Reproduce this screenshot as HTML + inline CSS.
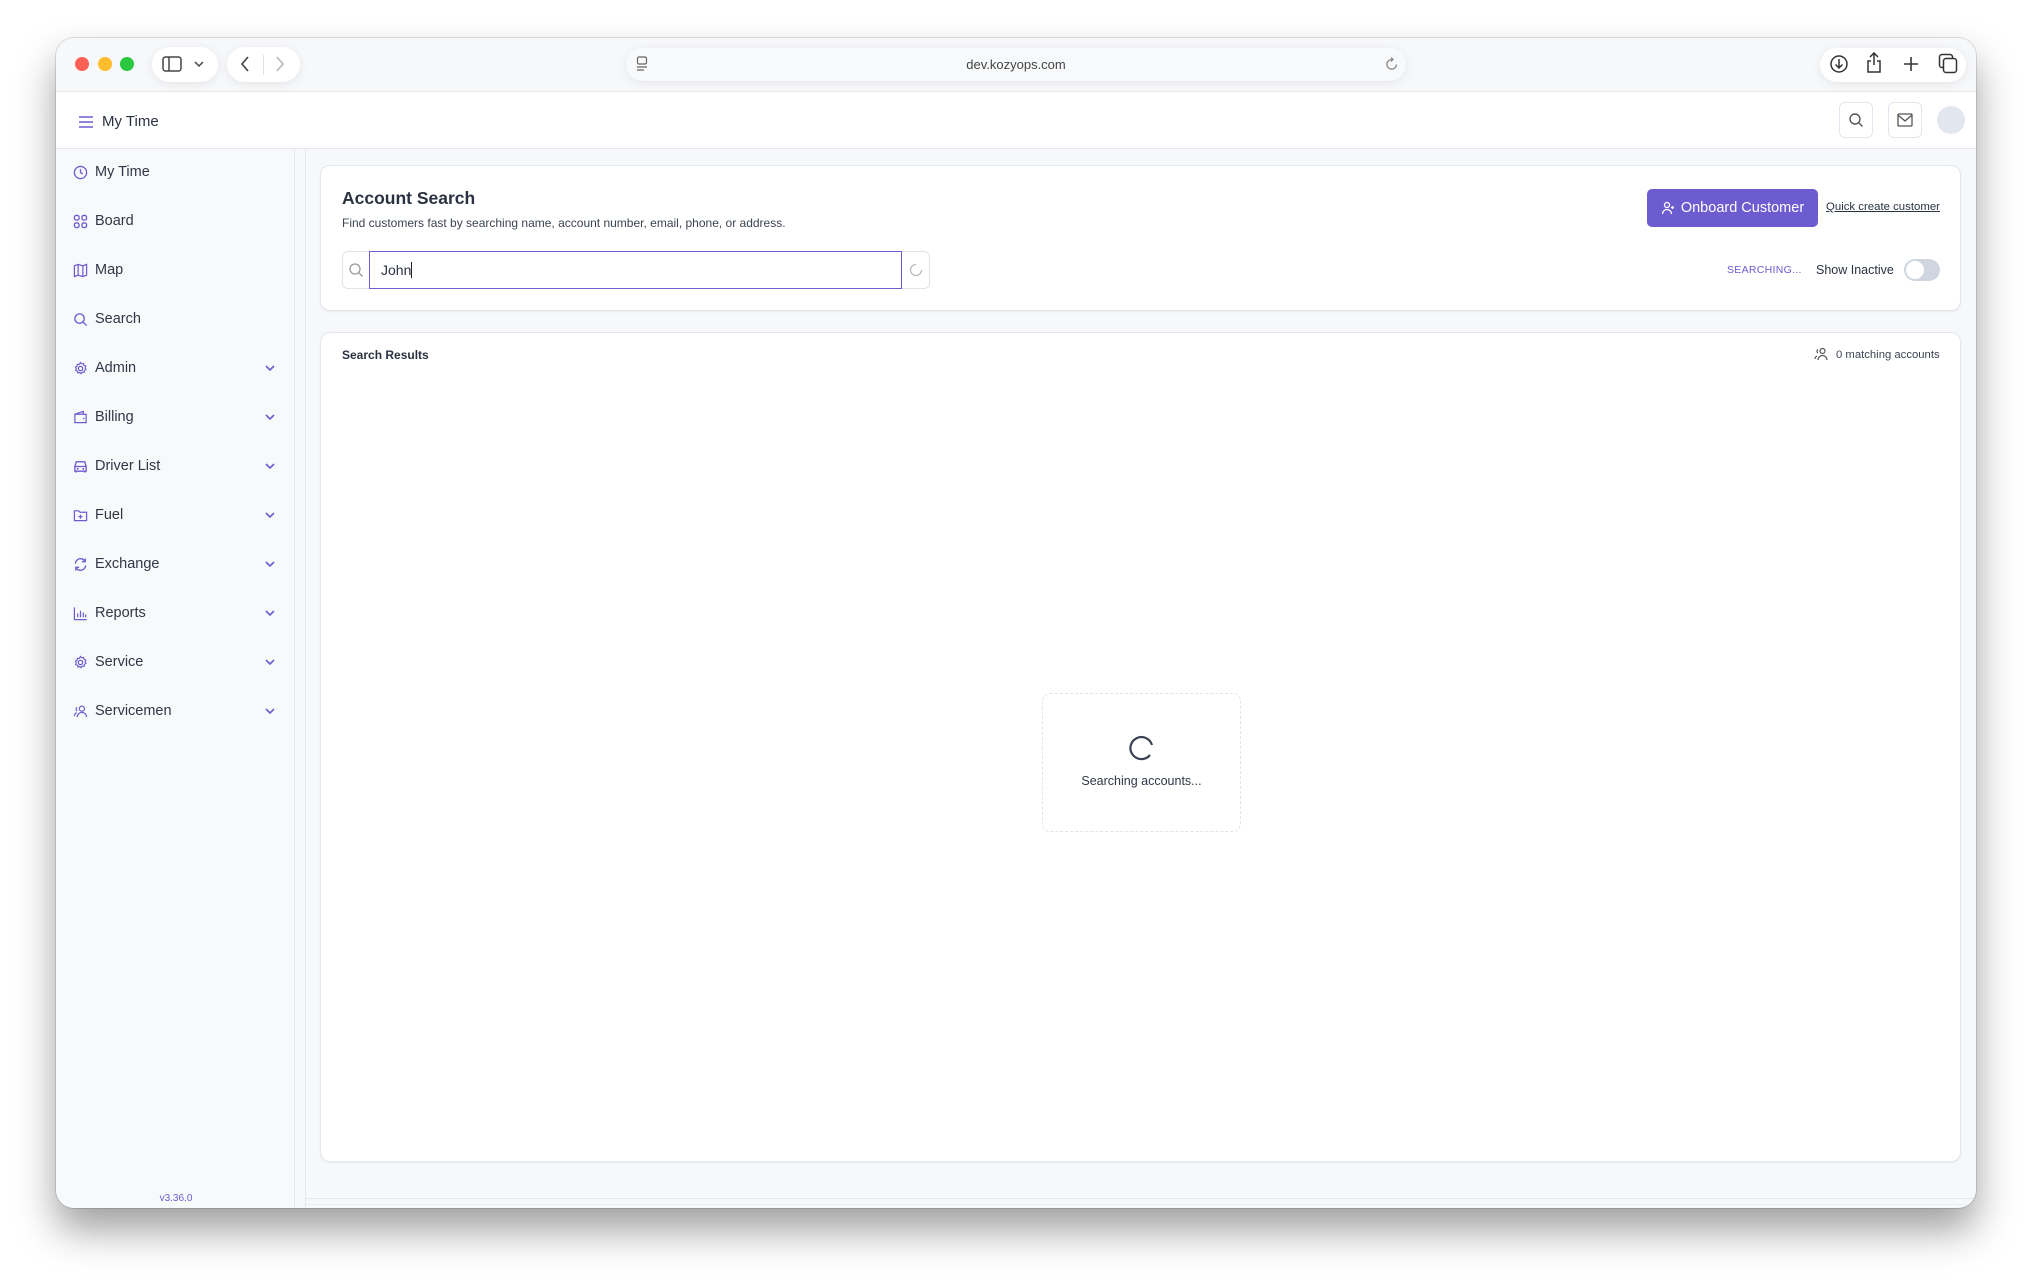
<!DOCTYPE html>
<html><head><meta charset="utf-8"><style>
*{box-sizing:border-box;margin:0;padding:0}
body{width:2032px;height:1282px;background:#fff;font-family:"Liberation Sans",sans-serif;position:relative;overflow:hidden;color:#2a3242}
.abs{position:absolute}
.win{left:56px;top:38px;width:1920px;height:1170px;border-radius:18px;background:#f7f8fa;overflow:hidden;box-shadow:0 22px 40px rgba(0,0,0,.38),0 0 0 1px rgba(0,0,0,.12)}
.pill{background:#fff;border-radius:18px;box-shadow:0 2px 10px rgba(0,0,0,.08)}
.dot{width:14px;height:14px;border-radius:50%}
.side{font-size:14.5px;color:#2f3747}
.item{position:absolute;left:17px;height:20px;display:flex;align-items:center;width:220px}
.item svg{width:15px;height:15px;margin-right:7px;flex:none}
.item .chev{position:absolute;left:191px;width:12px;height:12px;margin:0}
.card{background:#fff;border:1px solid #e4e7ec;border-radius:10px;box-shadow:0 1px 2px rgba(0,0,0,.06)}
</style></head><body>
<div class="abs win">
  <div class="abs" style="left:0;top:0;width:1920px;height:53px;background:#f7f8fa"></div>
  <div class="abs dot" style="left:19px;top:19px;background:#fe5f57"></div>
  <div class="abs dot" style="left:42px;top:19px;background:#febc2e"></div>
  <div class="abs dot" style="left:64px;top:19px;background:#28c840"></div>
  <div class="abs pill" style="left:96px;top:9px;width:66px;height:35px"></div>
  <svg class="abs" style="left:106px;top:18px" width="20" height="16" viewBox="0 0 20 16"><rect x="1" y="1" width="18" height="14" rx="2.5" fill="none" stroke="#444" stroke-width="1.5"/><line x1="7" y1="1" x2="7" y2="15" stroke="#444" stroke-width="1.5"/></svg>
  <svg class="abs" style="left:138px;top:22px" width="10" height="8" viewBox="0 0 10 8"><path d="M1 2l4 4 4-4" fill="none" stroke="#444" stroke-width="1.5"/></svg>
  <div class="abs pill" style="left:171px;top:9px;width:73px;height:35px"></div>
  <svg class="abs" style="left:183px;top:17px" width="12" height="18" viewBox="0 0 12 18"><path d="M9 2L3 9l6 7" fill="none" stroke="#444" stroke-width="1.7"/></svg>
  <div class="abs" style="left:207px;top:17px;width:1px;height:20px;background:#e2e2e2"></div>
  <svg class="abs" style="left:218px;top:17px" width="12" height="18" viewBox="0 0 12 18"><path d="M3 2l6 7-6 7" fill="none" stroke="#bbb" stroke-width="1.7"/></svg>
  <div class="abs pill" style="left:570px;top:10px;width:780px;height:33px;background:#f8f9fa"></div>
  <svg class="abs" style="left:580px;top:18px" width="12" height="16" viewBox="0 0 12 16"><rect x="1.5" y="1" width="9" height="7" rx="1.5" fill="none" stroke="#666" stroke-width="1.2"/><line x1="1" y1="11" x2="11" y2="11" stroke="#666" stroke-width="1.2"/><line x1="1" y1="14" x2="8" y2="14" stroke="#666" stroke-width="1.2"/></svg>
  <div class="abs" style="left:570px;top:19px;width:780px;text-align:center;font-size:13px;color:#444">dev.kozyops.com</div>
  <svg class="abs" style="left:1329px;top:18px" width="14" height="16" viewBox="0 0 14 16"><path d="M11.5 8.5A4.8 4.8 0 1 1 7 3.5" fill="none" stroke="#888" stroke-width="1.3"/><path d="M6 1.5l2 2-2 2" fill="none" stroke="#888" stroke-width="1.3"/></svg>
  <div class="abs pill" style="left:1764px;top:10px;width:146px;height:34px"></div>
  <svg class="abs" style="left:1773px;top:16px" width="20" height="20" viewBox="0 0 20 20"><circle cx="10" cy="10" r="8" fill="none" stroke="#333" stroke-width="1.5"/><path d="M10 5v9M6.5 10.5L10 14l3.5-3.5" fill="none" stroke="#333" stroke-width="1.5"/></svg>
  <svg class="abs" style="left:1810px;top:14px" width="16" height="22" viewBox="0 0 16 22"><path d="M8 1v12M4 5l4-4 4 4" fill="none" stroke="#333" stroke-width="1.5"/><path d="M5 9H2v11h12V9h-3" fill="none" stroke="#333" stroke-width="1.5"/></svg>
  <svg class="abs" style="left:1846px;top:17px" width="18" height="18" viewBox="0 0 18 18"><path d="M9 2v14M2 9h14" stroke="#333" stroke-width="1.6"/></svg>
  <svg class="abs" style="left:1882px;top:15px" width="20" height="21" viewBox="0 0 20 21"><rect x="1.5" y="1.5" width="13" height="13" rx="2.5" fill="none" stroke="#333" stroke-width="1.5"/><rect x="5.5" y="5.5" width="13" height="14" rx="2.5" fill="#fff" stroke="#333" stroke-width="1.5"/></svg>

  <div class="abs" style="left:0;top:53px;width:1920px;height:58px;background:#fff;border-top:1px solid #e6e8ee;border-bottom:1px solid #e3e6ee"></div>
  <svg class="abs" style="left:22px;top:77px" width="16" height="14" viewBox="0 0 16 14"><path d="M1 2h14M1 7h14M1 12h14" stroke="#6d5bd0" stroke-width="1.6"/></svg>
  <div class="abs" style="left:46px;top:75px;font-size:15px;color:#2a3242">My Time</div>
  <div class="abs" style="left:1783px;top:64px;width:34px;height:36px;border:1px solid #e3e6ee;border-radius:6px;background:#fff"></div>
  <svg class="abs" style="left:1792px;top:74px" width="16" height="16" viewBox="0 0 16 16"><circle cx="7" cy="7" r="5" fill="none" stroke="#555" stroke-width="1.4"/><path d="M11 11l3.5 3.5" stroke="#555" stroke-width="1.4"/></svg>
  <div class="abs" style="left:1832px;top:64px;width:34px;height:36px;border:1px solid #e3e6ee;border-radius:6px;background:#fff"></div>
  <svg class="abs" style="left:1841px;top:75px" width="16" height="14" viewBox="0 0 16 14"><rect x="1" y="1" width="14" height="12" rx="1" fill="none" stroke="#555" stroke-width="1.3"/><path d="M1 2l7 6 7-6" fill="none" stroke="#555" stroke-width="1.3"/></svg>
  <div class="abs" style="left:1881px;top:68px;width:28px;height:28px;border-radius:50%;background:#e1e6ef"></div>

  <div class="abs side" style="left:0;top:111px;width:239px;height:1059px;background:#f8f9fb;border-right:1px solid #e6e8ee">
    <div class="item" style="top:13px"><svg viewBox="0 0 16 16"><circle cx="8" cy="8" r="6.5" fill="none" stroke="#6d5bd0" stroke-width="1.4"/><path d="M8 4.5V8l2.5 1.5" fill="none" stroke="#6d5bd0" stroke-width="1.4"/></svg>My Time</div>
    <div class="item" style="top:62px"><svg viewBox="0 0 16 16"><g fill="none" stroke="#6d5bd0" stroke-width="1.4"><rect x="1.5" y="1.5" width="5" height="5" rx="2"/><rect x="9.5" y="1.5" width="5" height="5" rx="2"/><rect x="1.5" y="9.5" width="5" height="5" rx="2"/><rect x="9.5" y="9.5" width="5" height="5" rx="2"/></g></svg>Board</div>
    <div class="item" style="top:111px"><svg viewBox="0 0 16 16"><path d="M1.5 3l4-1.5 5 1.5 4-1.5v11.5l-4 1.5-5-1.5-4 1.5zM5.5 1.5v11.5M10.5 3v11.5" fill="none" stroke="#6d5bd0" stroke-width="1.3"/></svg>Map</div>
    <div class="item" style="top:160px"><svg viewBox="0 0 16 16"><circle cx="7" cy="7" r="5" fill="none" stroke="#6d5bd0" stroke-width="1.4"/><path d="M11 11l3.5 3.5" stroke="#6d5bd0" stroke-width="1.4"/></svg>Search</div>
    <div class="item" style="top:209px"><svg viewBox="0 0 16 16"><circle cx="8" cy="8" r="2.3" fill="none" stroke="#6d5bd0" stroke-width="1.3"/><path d="M8 1.5l1.3 1.6 2-.5.5 2 1.9.8-.8 1.9 1 1.7-1.8 1-.2 2-2-.1-1.2 1.6-1.5-1.3-1.9.6-.6-1.9-1.9-.8.8-1.9-1-1.7 1.8-1 .2-2 2 .1z" fill="none" stroke="#6d5bd0" stroke-width="1.2"/></svg>Admin<svg class="chev" viewBox="0 0 12 12"><path d="M2 4l4 4 4-4" fill="none" stroke="#6d5bd0" stroke-width="1.6"/></svg></div>
    <div class="item" style="top:258px"><svg viewBox="0 0 16 16"><path d="M2 4.5h12v9H2zM2 4.5l9-3v3" fill="none" stroke="#6d5bd0" stroke-width="1.3"/><circle cx="11.5" cy="9" r=".9" fill="#6d5bd0"/></svg>Billing<svg class="chev" viewBox="0 0 12 12"><path d="M2 4l4 4 4-4" fill="none" stroke="#6d5bd0" stroke-width="1.6"/></svg></div>
    <div class="item" style="top:307px"><svg viewBox="0 0 16 16"><path d="M2 8l1.5-5h9L14 8v5H2zM2 8h12M3.5 13v1.5M12.5 13v1.5" fill="none" stroke="#6d5bd0" stroke-width="1.4"/><circle cx="5" cy="10.5" r="1" fill="#6d5bd0"/><circle cx="11" cy="10.5" r="1" fill="#6d5bd0"/></svg>Driver List<svg class="chev" viewBox="0 0 12 12"><path d="M2 4l4 4 4-4" fill="none" stroke="#6d5bd0" stroke-width="1.6"/></svg></div>
    <div class="item" style="top:356px"><svg viewBox="0 0 16 16"><path d="M1.5 3h4.5l1.5 1.5h7v9h-13z" fill="none" stroke="#6d5bd0" stroke-width="1.3"/><path d="M8 7v4.5M5.8 9.2h4.4" stroke="#6d5bd0" stroke-width="1.3"/></svg>Fuel<svg class="chev" viewBox="0 0 12 12"><path d="M2 4l4 4 4-4" fill="none" stroke="#6d5bd0" stroke-width="1.6"/></svg></div>
    <div class="item" style="top:405px"><svg viewBox="0 0 16 16"><path d="M2.5 7A5.5 5.5 0 0 1 13 5M13.5 9A5.5 5.5 0 0 1 3 11M13 1.5V5H9.5M3 14.5V11h3.5" fill="none" stroke="#6d5bd0" stroke-width="1.4"/></svg>Exchange<svg class="chev" viewBox="0 0 12 12"><path d="M2 4l4 4 4-4" fill="none" stroke="#6d5bd0" stroke-width="1.6"/></svg></div>
    <div class="item" style="top:454px"><svg viewBox="0 0 16 16"><path d="M1.5 1.5v13h13M5 12V8M8 12V5M11 12V7M13.5 12V9" fill="none" stroke="#6d5bd0" stroke-width="1.3"/></svg>Reports<svg class="chev" viewBox="0 0 12 12"><path d="M2 4l4 4 4-4" fill="none" stroke="#6d5bd0" stroke-width="1.6"/></svg></div>
    <div class="item" style="top:503px"><svg viewBox="0 0 16 16"><circle cx="8" cy="8" r="2.3" fill="none" stroke="#6d5bd0" stroke-width="1.3"/><path d="M8 1.5l1.3 1.6 2-.5.5 2 1.9.8-.8 1.9 1 1.7-1.8 1-.2 2-2-.1-1.2 1.6-1.5-1.3-1.9.6-.6-1.9-1.9-.8.8-1.9-1-1.7 1.8-1 .2-2 2 .1z" fill="none" stroke="#6d5bd0" stroke-width="1.2"/></svg>Service<svg class="chev" viewBox="0 0 12 12"><path d="M2 4l4 4 4-4" fill="none" stroke="#6d5bd0" stroke-width="1.6"/></svg></div>
    <div class="item" style="top:552px"><svg viewBox="0 0 16 16"><circle cx="9.5" cy="5" r="2.7" fill="none" stroke="#6d5bd0" stroke-width="1.3"/><path d="M4.5 14a5 5 0 0 1 10 0M4.5 3.5a2.3 2.3 0 0 0 0 4M1.5 13a4 4 0 0 1 2.5-3.7" fill="none" stroke="#6d5bd0" stroke-width="1.3"/></svg>Servicemen<svg class="chev" viewBox="0 0 12 12"><path d="M2 4l4 4 4-4" fill="none" stroke="#6d5bd0" stroke-width="1.6"/></svg></div>
  </div>
  <div class="abs" style="left:95px;top:1155px;width:50px;text-align:center;font-size:10px;color:#6d5bd0">v3.36.0</div>
  <div class="abs" style="left:249px;top:111px;width:1px;height:1059px;background:#e6e8ee"></div>
  <div class="abs" style="left:250px;top:1160px;width:1670px;height:1px;background:#e6e8ee"></div>
  <div class="abs" style="left:250px;top:1166px;width:1670px;height:1px;background:#eceef2"></div>

  <div class="abs card" style="left:264px;top:127px;width:1641px;height:146px"></div>
  <div class="abs" style="left:286px;top:150px;font-size:17.5px;font-weight:bold;color:#2a3242">Account Search</div>
  <div class="abs" style="left:286px;top:178px;font-size:12px;color:#3c4452">Find customers fast by searching name, account number, email, phone, or address.</div>
  <div class="abs" style="left:286px;top:213px;width:588px;height:38px;border:1px solid #dfe3ea;border-radius:6px;background:#fff"></div>
  <svg class="abs" style="left:292px;top:224px" width="16" height="16" viewBox="0 0 16 16"><circle cx="7" cy="7" r="5" fill="none" stroke="#999" stroke-width="1.3"/><path d="M11 11l3.5 3.5" stroke="#999" stroke-width="1.3"/></svg>
  <div class="abs" style="left:313px;top:213px;width:533px;height:38px;border:1.5px solid #6d5bd0;background:#fff"></div>
  <div class="abs" style="left:325px;top:224px;font-size:14px;color:#2a3242">John<span style="display:inline-block;width:1px;height:16px;background:#222;vertical-align:-3px"></span></div>
  <svg class="abs" style="left:852px;top:224px" width="16" height="16" viewBox="0 0 16 16"><path d="M13.5 8A5.5 5.5 0 1 1 8 2.5" fill="none" stroke="#bbb" stroke-width="1.3"/></svg>
  <div class="abs" style="left:1591px;top:151px;width:171px;height:38px;background:#6d5bd0;border-radius:5px;color:#fff;font-size:14.5px;display:flex;align-items:center;justify-content:center"><svg width="14" height="14" viewBox="0 0 14 14" style="margin-right:6px"><circle cx="6" cy="4" r="2.5" fill="none" stroke="#fff" stroke-width="1.3"/><path d="M1.5 13a4.5 4.5 0 0 1 9 0M11.5 5v3M10 6.5h3" fill="none" stroke="#fff" stroke-width="1.3"/></svg>Onboard Customer</div>
  <div class="abs" style="left:1770px;top:163px;font-size:11.4px;color:#2a3242;text-decoration:underline">Quick create customer</div>
  <div class="abs" style="left:1671px;top:226px;font-size:10.5px;color:#6d5bd0;letter-spacing:.3px">SEARCHING...</div>
  <div class="abs" style="left:1760px;top:225px;font-size:12.5px;color:#2a3242">Show Inactive</div>
  <div class="abs" style="left:1848px;top:221px;width:36px;height:22px;border-radius:11px;background:#cfd6e0"></div>
  <div class="abs" style="left:1850px;top:223px;width:18px;height:18px;border-radius:50%;background:#fff"></div>

  <div class="abs card" style="left:264px;top:294px;width:1641px;height:830px"></div>
  <div class="abs" style="left:286px;top:310px;font-size:12px;font-weight:bold;color:#2a3242">Search Results</div>
  <svg class="abs" style="left:1758px;top:309px" width="15" height="14" viewBox="0 0 15 14"><circle cx="8.5" cy="4" r="2.5" fill="none" stroke="#555" stroke-width="1.2"/><path d="M4 13a4.5 4.5 0 0 1 9 0M4 2.5a2 2 0 0 0 0 3.5M1 12a3.5 3.5 0 0 1 2-3" fill="none" stroke="#555" stroke-width="1.2"/></svg>
  <div class="abs" style="left:1780px;top:311px;font-size:11.3px;color:#3c4452">0 matching accounts</div>
  <div class="abs" style="left:986px;top:655px;width:199px;height:139px;border:1px dashed #e1e4ea;border-radius:8px;background:#fff"></div>
  <svg class="abs" style="left:1072px;top:697px" width="28" height="28" viewBox="0 0 28 28"><path d="M22 20A11 11 0 1 1 24 10" fill="none" stroke="#3a4252" stroke-width="2.2"/></svg>
  <div class="abs" style="left:986px;top:736px;width:199px;text-align:center;font-size:12.5px;color:#2f3747">Searching accounts...</div>
</div>
</body></html>
